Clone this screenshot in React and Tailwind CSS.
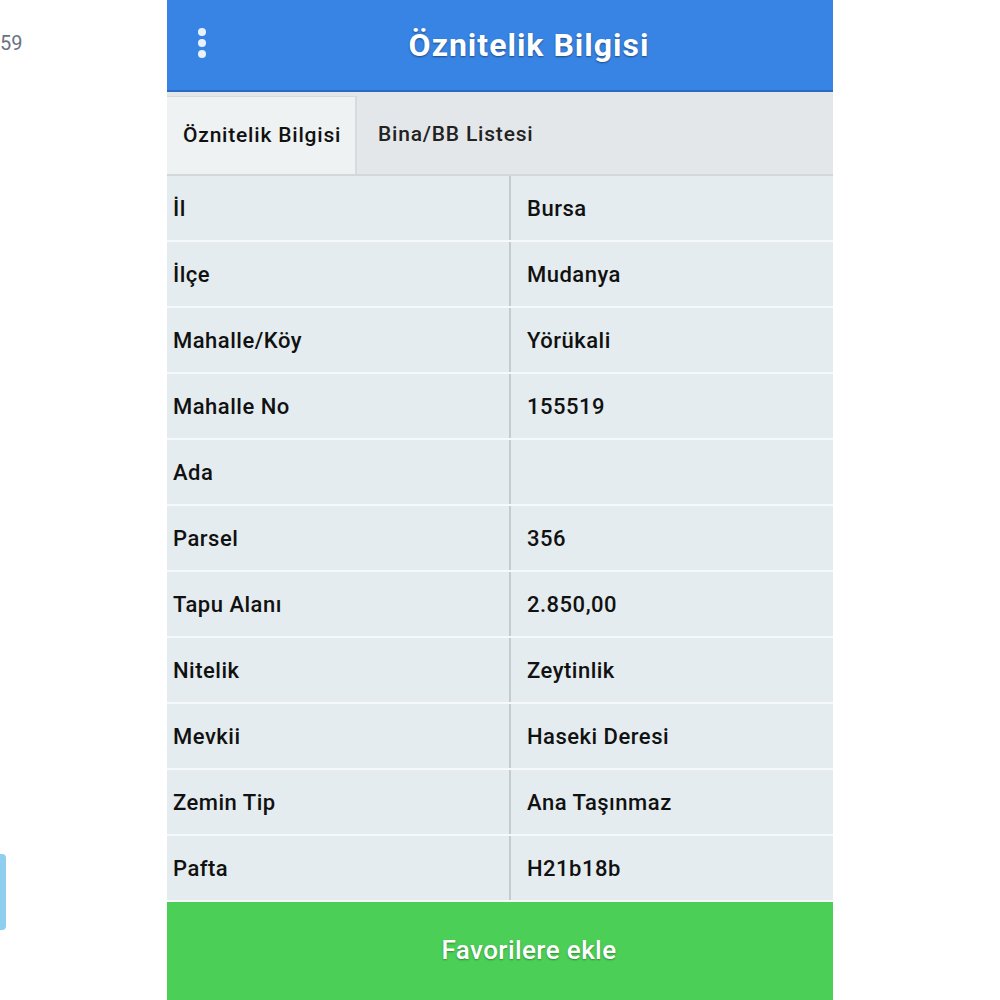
import React from 'react';

const rows = [
  ['İl', 'Bursa'],
  ['İlçe', 'Mudanya'],
  ['Mahalle/Köy', 'Yörükali'],
  ['Mahalle No', '155519'],
  ['Ada', ''],
  ['Parsel', '356'],
  ['Tapu Alanı', '2.850,00'],
  ['Nitelik', 'Zeytinlik'],
  ['Mevkii', 'Haseki Deresi'],
  ['Zemin Tip', 'Ana Taşınmaz'],
  ['Pafta', 'H21b18b'],
];

const App = () => {
  return (
    <div className="w-[1000px] h-[1000px] bg-white flex overflow-hidden font-['Roboto',sans-serif]">
      <div className="w-[167px] flex flex-col justify-between shrink-0">
        <p className="text-[20px] text-gray-500 mt-[28px] ml-0">59</p>
        <div className="w-[6px] h-[76px] bg-[#8ecff0] rounded-r-sm mb-[70px]" />
      </div>

      <div className="w-[666px] h-full flex flex-col bg-[#e4ecef] shrink-0">
        <div className="h-[92px] bg-[#3784e5] border-b-2 border-[#2a6cc4] flex items-center relative shrink-0">
          <div className="absolute left-[31px] top-[28px] flex flex-col gap-[3px]">
            <span className="w-[8px] h-[8px] rounded-full bg-[#e8f2ff]" />
            <span className="w-[8px] h-[8px] rounded-full bg-[#e8f2ff]" />
            <span className="w-[8px] h-[8px] rounded-full bg-[#e8f2ff]" />
          </div>
          <h1 className="w-full text-center pl-[58px] text-white text-[32px] font-bold tracking-[1px] [text-shadow:0_1px_2px_rgba(0,0,0,0.45)]">
            Öznitelik Bilgisi
          </h1>
        </div>

        <div className="h-[84px] bg-[#e3e7e9] flex items-end shrink-0 border-b-2 border-[#d2d7da]">
          <div className="w-[190px] h-[78px] bg-[#eef2f3] border-r-2 border-t border-[#d6dbde] flex items-center pl-[16px] text-[21px] tracking-[0.8px] text-[#111] font-medium">
            Öznitelik Bilgisi
          </div>
          <div className="h-[78px] flex items-center pl-[21px] text-[21px] tracking-[0.8px] text-[#222] font-medium">
            Bina/BB Listesi
          </div>
        </div>

        <div className="flex flex-col shrink-0">
          {rows.map(([label, value]) => (
            <div
              key={label}
              className="h-[66px] flex border-b-2 border-[#f5f9fa] text-[22px] tracking-[0.5px] text-[#111] font-medium"
            >
              <div className="w-[344px] flex items-center pl-[6px] border-r-2 border-[#c4cccf]">
                {label}
              </div>
              <div className="flex-1 flex items-center pl-[16px]">{value}</div>
            </div>
          ))}
        </div>

        <div className="flex-1 bg-[#4ccf57] flex items-center justify-center pl-[58px] pb-[2px]">
          <span className="text-white text-[26px] tracking-[0.4px] font-medium [text-shadow:0_1px_2px_rgba(0,0,0,0.35)]">
            Favorilere ekle
          </span>
        </div>
      </div>

      <div className="flex-1 bg-white" />
    </div>
  );
};

export default App;
